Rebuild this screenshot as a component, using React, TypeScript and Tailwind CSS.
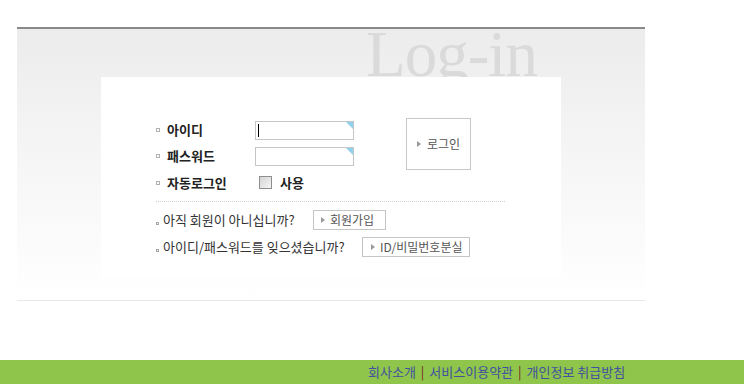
const KR = { fontFamily: '"Noto Sans CJK KR", "Noto Sans", sans-serif' };

function Bullet({ low }: { low?: boolean }) {
  return (
    <div
      className={
        low
          ? "w-[3px] h-[3px] border border-[#a5a5a5] self-end mb-[5px]"
          : "w-[4px] h-[4px] border border-[#b0b0b0]"
      }
    />
  );
}

function TextBox({ caret }: { caret?: boolean }) {
  return (
    <div className="relative w-[99px] h-[19px] border border-[#c6c6c6] bg-white">
      {caret && <div className="absolute left-[2px] top-[2px] w-[1px] h-[13px] bg-black" />}
      <div className="absolute top-0 right-0 w-0 h-0 border-t-[7px] border-t-[#8fd0ee] border-l-[7px] border-l-transparent" />
    </div>
  );
}

function Arrow() {
  return (
    <span className="inline-block w-0 h-0 border-l-[4px] border-l-[#9a9a9a] border-y-[3px] border-y-transparent" />
  );
}

export default function App() {
  return (
    <div className="w-[744px] h-[384px] bg-white flex flex-col overflow-hidden" style={KR}>
      <div className="h-[27px] shrink-0" />
      <div className="ml-[17px] w-[628px] h-[274px] shrink-0 border-t-2 border-t-[#8a8a8a] border-b border-b-[#e9e9e9] bg-linear-to-b from-[#ececec] via-[#f6f6f6] to-white">
        <div className="h-[48px] overflow-hidden">
          <div
            className="pl-[349px] mt-[-7px] text-[65px] leading-none text-[#dadada] tracking-[-1px]"
            style={{ fontFamily: '"Liberation Serif", serif' }}
          >
            Log-in
          </div>
        </div>
        <div className="ml-[84px] w-[460px] h-[200px] bg-white pt-[40px] pl-[55px]">
          <div className="flex">
            <div className="w-[250px] flex flex-col">
              <div className="flex items-center h-[26px]">
                <Bullet />
                <div className="ml-[7px] w-[88px] text-[13px] font-bold text-[#222]">아이디</div>
                <TextBox caret />
              </div>
              <div className="flex items-center h-[26px]">
                <Bullet />
                <div className="ml-[7px] w-[88px] text-[13px] font-bold text-[#222]">패스워드</div>
                <TextBox />
              </div>
              <div className="flex items-center h-[27px]">
                <Bullet />
                <div className="ml-[7px] w-[92px] text-[13px] font-bold text-[#222]">자동로그인</div>
                <div className="w-[13px] h-[13px] border border-[#8e8e8e] bg-linear-to-br from-[#d4d4d4] to-[#f6f6f6]" />
                <div className="ml-[8px] text-[13px] font-bold text-[#222]">사용</div>
              </div>
            </div>
            <div className="mt-[1px] w-[65px] h-[52px] border border-[#c8c8c8] bg-white flex items-center justify-center gap-[6px] text-[12px] text-[#555]">
              <Arrow />
              <span>로그인</span>
            </div>
          </div>
          <div className="mt-[5px] w-[349px] border-t border-dotted border-t-[#cfcfcf]" />
          <div className="mt-[8px] flex items-center h-[20px]">
            <Bullet low />
            <div className="ml-[4px] w-[150px] text-[13px] text-[#333]">아직 회원이 아니십니까?</div>
            <div className="w-[73px] h-[20px] border border-[#c5c5c5] bg-white flex items-center pl-[7px] gap-[5px] text-[12px] text-[#555]">
              <Arrow />
              <span>회원가입</span>
            </div>
          </div>
          <div className="mt-[7px] flex items-center h-[20px]">
            <Bullet low />
            <div className="ml-[4px] w-[199px] text-[13px] text-[#333]">아이디/패스워드를 잊으셨습니까?</div>
            <div className="w-[108px] h-[20px] border border-[#c5c5c5] bg-white flex items-center pl-[8px] gap-[5px] text-[12px] text-[#555]">
              <Arrow />
              <span>ID/비밀번호분실</span>
            </div>
          </div>
        </div>
      </div>
      <div className="mt-auto h-[24px] shrink-0 bg-[#8ec54a] flex items-center pl-[368px] text-[13px] text-[#4350a0]">
        <span>회사소개</span>
        <span className="mx-[5px] text-[#7a1f1f]">|</span>
        <span>서비스이용약관</span>
        <span className="mx-[5px] text-[#7a1f1f]">|</span>
        <span>개인정보 취급방침</span>
      </div>
    </div>
  );
}
